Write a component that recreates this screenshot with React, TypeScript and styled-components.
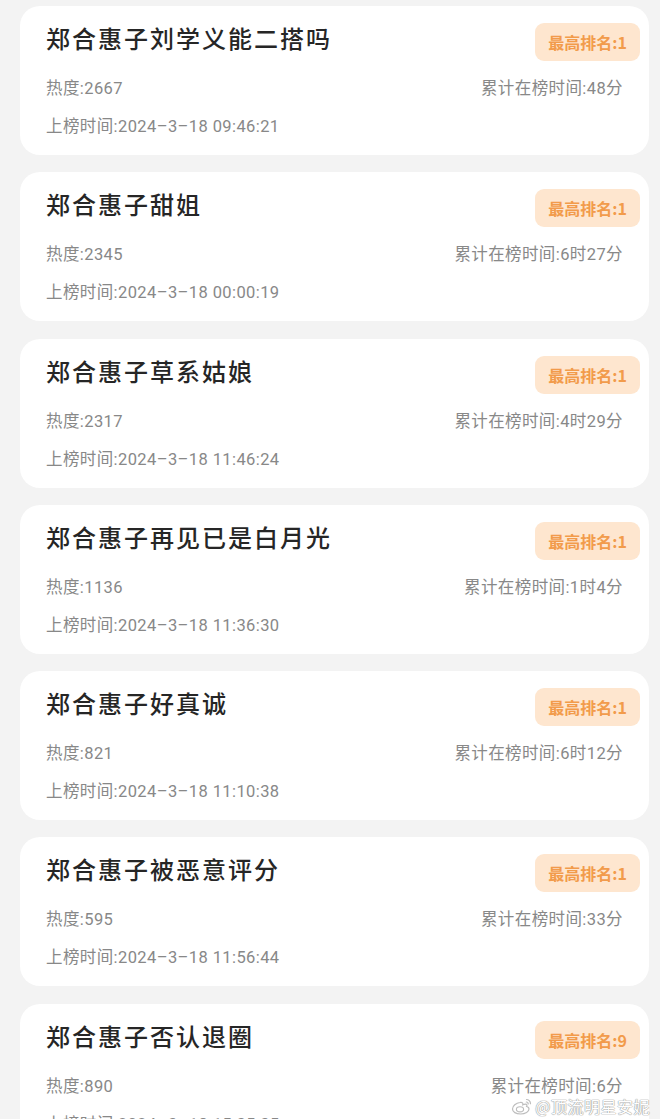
import styled, { createGlobalStyle } from "styled-components";

type Topic = {
  title: string;
  rank: number;
  heat: number;
  total: string;
  listed: string;
};

const topics: Topic[] = [
  { title: "郑合惠子刘学义能二搭吗", rank: 1, heat: 2667, total: "48分", listed: "2024–3–18 09:46:21" },
  { title: "郑合惠子甜姐", rank: 1, heat: 2345, total: "6时27分", listed: "2024–3–18 00:00:19" },
  { title: "郑合惠子草系姑娘", rank: 1, heat: 2317, total: "4时29分", listed: "2024–3–18 11:46:24" },
  { title: "郑合惠子再见已是白月光", rank: 1, heat: 1136, total: "1时4分", listed: "2024–3–18 11:36:30" },
  { title: "郑合惠子好真诚", rank: 1, heat: 821, total: "6时12分", listed: "2024–3–18 11:10:38" },
  { title: "郑合惠子被恶意评分", rank: 1, heat: 595, total: "33分", listed: "2024–3–18 11:56:44" },
  { title: "郑合惠子否认退圈", rank: 9, heat: 890, total: "6分", listed: "2024–3–18 15:35:35" },
];

const App = () => {
  return (
    <>
      <GlobalStyle />
      <Page>
        {topics.map((t) => (
          <Card key={t.title}>
            <Header>
              <Title>{t.title}</Title>
              <Badge>最高排名:{t.rank}</Badge>
            </Header>
            <MetaRow>
              <Meta>热度:{t.heat}</Meta>
              <Meta>累计在榜时间:{t.total}</Meta>
            </MetaRow>
            <DateRow>上榜时间:{t.listed}</DateRow>
          </Card>
        ))}
        <Watermark>
          <WeiboLogo />
          <span>@顶流明星安妮</span>
        </Watermark>
      </Page>
    </>
  );
};

const WeiboLogo = () => (
  <svg width="22" height="18" viewBox="0 0 22 18" fill="none">
    <path
      d="M9 5.5c-4 .5-7.5 3.5-7.5 6.5 0 3 3.5 5 8 5 5 0 8.5-2.5 8.5-5 0-1.6-1.4-2.3-2.4-2.5.6-1.2.4-2.4-1.2-2.4-1 0-2 .4-2.6.7.4-1.6-.4-2.7-2.8-2.3z"
      stroke="#bdbdbd"
      strokeWidth="1.2"
      fill="#fff"
    />
    <ellipse cx="9" cy="12.3" rx="3.6" ry="2.6" stroke="#bdbdbd" strokeWidth="1.1" fill="#fff" />
    <path d="M15.5 2.5c2 0 4 1.8 4 4.2" stroke="#bdbdbd" strokeWidth="1.2" strokeLinecap="round" />
    <path d="M15.3 5c1 0 1.9.8 1.9 1.9" stroke="#bdbdbd" strokeWidth="1.2" strokeLinecap="round" />
  </svg>
);

const GlobalStyle = createGlobalStyle`
  html, body {
    margin: 0;
    padding: 0;
    background: #f3f3f3;
    overflow: hidden;
  }
  body {
    font-family: Roboto, "Noto Sans CJK SC", sans-serif;
  }
`;

const Page = styled.div`
  position: relative;
  height: 1119px;
  overflow: hidden;
  padding: 6px 11px 0 20px;
  display: flex;
  flex-direction: column;
  gap: 17.3px;
`;

const Card = styled.div`
  flex: none;
  height: 149px;
  box-sizing: border-box;
  background: #ffffff;
  border-radius: 20px;
  padding: 16px 9px 0 26px;
  display: flex;
  flex-direction: column;
`;

const Header = styled.div`
  display: flex;
  justify-content: space-between;
  align-items: flex-start;
  height: 39px;
`;

const Title = styled.div`
  font-family: "Noto Sans CJK SC", sans-serif;
  font-size: 24px;
  line-height: 32px;
  font-weight: 500;
  letter-spacing: 2px;
  color: #262626;
`;

const Badge = styled.div`
  height: 38px;
  margin-top: 1px;
  padding: 0 13px;
  box-sizing: border-box;
  border-radius: 9px;
  background: #fee6cf;
  color: #f29b4b;
  font-family: "Noto Sans CJK SC", sans-serif;
  font-size: 16px;
  font-weight: 700;
  display: flex;
  align-items: center;
`;

const MetaRow = styled.div`
  display: flex;
  justify-content: space-between;
  margin-top: 16px;
  padding-right: 17px;
`;

const Meta = styled.span`
  font-size: 16.5px;
  line-height: 24px;
  letter-spacing: 0.4px;
  color: #888888;
`;

const DateRow = styled.div`
  margin-top: 14px;
  font-size: 16.5px;
  line-height: 24px;
  letter-spacing: 0.4px;
  color: #888888;
`;

const Watermark = styled.div`
  position: absolute;
  right: 10px;
  bottom: 7px;
  display: flex;
  align-items: center;
  gap: 2px;
  font-family: "Noto Sans CJK SC", sans-serif;
  font-size: 16px;
  color: #ffffff;
  letter-spacing: 0.5px;
  text-shadow: 0 0 1px #9e9e9e, 0 0 1px #9e9e9e, 0 0 1px #9e9e9e;
`;

export default App;
